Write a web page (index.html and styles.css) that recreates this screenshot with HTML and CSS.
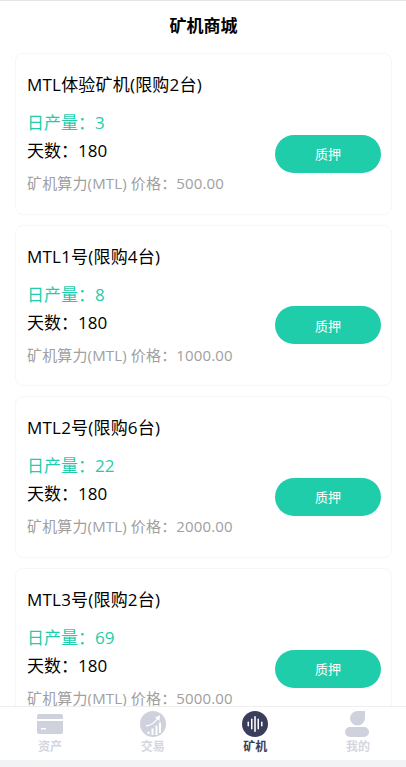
FILE: index.html
```html
<!DOCTYPE html>
<html lang="zh-CN">
<head>
<meta charset="utf-8">
<title>矿机商城</title>
<link rel="stylesheet" href="styles.css">
</head>
<body>
<div class="app">
  <header class="header">矿机商城</header>
  <main class="list">
    <section class="card">
      <h2 class="name">MTL体验矿机(限购2台)</h2>
      <div class="row">
        <div class="info">
          <p class="yield">日产量：3</p>
          <p class="days">天数：180</p>
          <p class="price">矿机算力(MTL) 价格：500.00</p>
        </div>
        <button class="pledge">质押</button>
      </div>
    </section>
    <section class="card">
      <h2 class="name">MTL1号(限购4台)</h2>
      <div class="row">
        <div class="info">
          <p class="yield">日产量：8</p>
          <p class="days">天数：180</p>
          <p class="price">矿机算力(MTL) 价格：1000.00</p>
        </div>
        <button class="pledge">质押</button>
      </div>
    </section>
    <section class="card">
      <h2 class="name">MTL2号(限购6台)</h2>
      <div class="row">
        <div class="info">
          <p class="yield">日产量：22</p>
          <p class="days">天数：180</p>
          <p class="price">矿机算力(MTL) 价格：2000.00</p>
        </div>
        <button class="pledge">质押</button>
      </div>
    </section>
    <section class="card">
      <h2 class="name">MTL3号(限购2台)</h2>
      <div class="row">
        <div class="info">
          <p class="yield">日产量：69</p>
          <p class="days">天数：180</p>
          <p class="price">矿机算力(MTL) 价格：5000.00</p>
        </div>
        <button class="pledge">质押</button>
      </div>
    </section>
  </main>
  <nav class="tabbar">
    <a class="tab">
      <svg class="icon" viewBox="0 0 26 26"><path fill="#cfd2dd" d="M0 5a2 2 0 0 1 2-2h22a2 2 0 0 1 2 2v3H0zM0 10h26v11a2 2 0 0 1-2 2H2a2 2 0 0 1-2-2z"/><rect x="4" y="17" width="5" height="1.500" fill="#fff"/></svg>
      <span>资产</span>
    </a>
    <a class="tab">
      <svg class="icon" viewBox="0 0 26 26"><circle cx="13" cy="13" r="13" fill="#cfd2dd"/><path fill="#fff" d="M7.500 20.500h2V23h-2zM11.500 17.500h2V24h-2zM15.500 14.500h2V24h-2zM19 11.500h2V22h-2z"/><path fill="none" stroke="#fff" stroke-width="1.300" d="M6 15c5-.5 8.500-3 11.500-7.500"/><path fill="#fff" d="M15 6.500l5-2.200-.6 5.600z"/></svg>
      <span>交易</span>
    </a>
    <a class="tab active">
      <svg class="icon" viewBox="0 0 26 26"><circle cx="13" cy="13" r="13" fill="#3a3d5c"/><g fill="#fff"><rect x="5.500" y="10.500" width="1.500" height="5" rx=".75"/><rect x="9" y="7.500" width="1.500" height="11" rx=".75"/><rect x="12.200" y="5" width="1.600" height="16" rx=".8"/><rect x="15.500" y="7.500" width="1.500" height="11" rx=".75"/><rect x="19" y="10.500" width="1.500" height="5" rx=".75"/></g></svg>
      <span>矿机</span>
    </a>
    <a class="tab">
      <svg class="icon" viewBox="0 0 26 26"><path fill="#cfd2dd" d="M12.500 0H20v7a7.500 7.500 0 0 1-7.500 7.500A7.500 7.500 0 0 1 5 7a7.500 7.500 0 0 1 7.500-7zM5 16h14a5 5 0 0 1 0 10H5a5 5 0 0 1 0-10z"/></svg>
      <span>我的</span>
    </a>
  </nav>
</div>
</body>
</html>
```
FILE: styles.css
```css
* { box-sizing: border-box; }
html, body { margin: 0; padding: 0; height: 100%; overflow: hidden; }
body { background: #fff; font-family: "Open Sans", "Noto Sans CJK SC", sans-serif; color: #000; }
.app { position: relative; height: 767px; overflow: hidden; border-top: 1px solid #e5e5e5; }
.header { height: 52px; display: flex; align-items: center; justify-content: center; font-size: 17px; font-weight: 700; padding: 0 0 5px 1px; }
.list { padding: 0 14px 0 15px; display: flex; flex-direction: column; gap: 10px; }
.card { height: 161.67px; flex: none; border: 1px solid #f7f7f7; border-radius: 8px; padding: 19px 11px 0; }
.name { margin: 0; font-size: 17px; font-weight: 400; line-height: 24px; letter-spacing: .2px; }
.row { display: flex; justify-content: space-between; align-items: flex-start; margin-top: 12px; }
.info p { margin: 0; }
.yield { font-size: 17px; line-height: 28px; color: #1fcdaa; }
.days { font-size: 17px; line-height: 28px; }
.price { font-size: 15px; line-height: 30px; color: #a0a0a0; padding-top: 3px; letter-spacing: .15px; }
.pledge { width: 106px; height: 38px; border: 0; border-radius: 19px; background: #1fcdaa; color: #fff; font: inherit; font-size: 13px; padding: 0; margin-top: 25.6px; margin-right: -1px; }
.tabbar { position: absolute; left: 0; right: 0; bottom: 7px; height: 54px; background: #fff; border-top: 1px solid #eee; display: flex; justify-content: space-between; padding: 0 35px 0 37px; }
.app::after { content: ""; position: absolute; left: 0; right: 0; bottom: 0; height: 7px; background: #f2f3f5; }
.tab { width: 26px; display: flex; flex-direction: column; align-items: center; padding-top: 4px; font-size: 12px; font-weight: 700; color: #d4d6df; line-height: 15px; gap: 2px; }
.tab span { white-space: nowrap; }
.tab.active { color: #3a3d5c; }
.icon { width: 26px; height: 26px; display: block; flex: none; }
```
